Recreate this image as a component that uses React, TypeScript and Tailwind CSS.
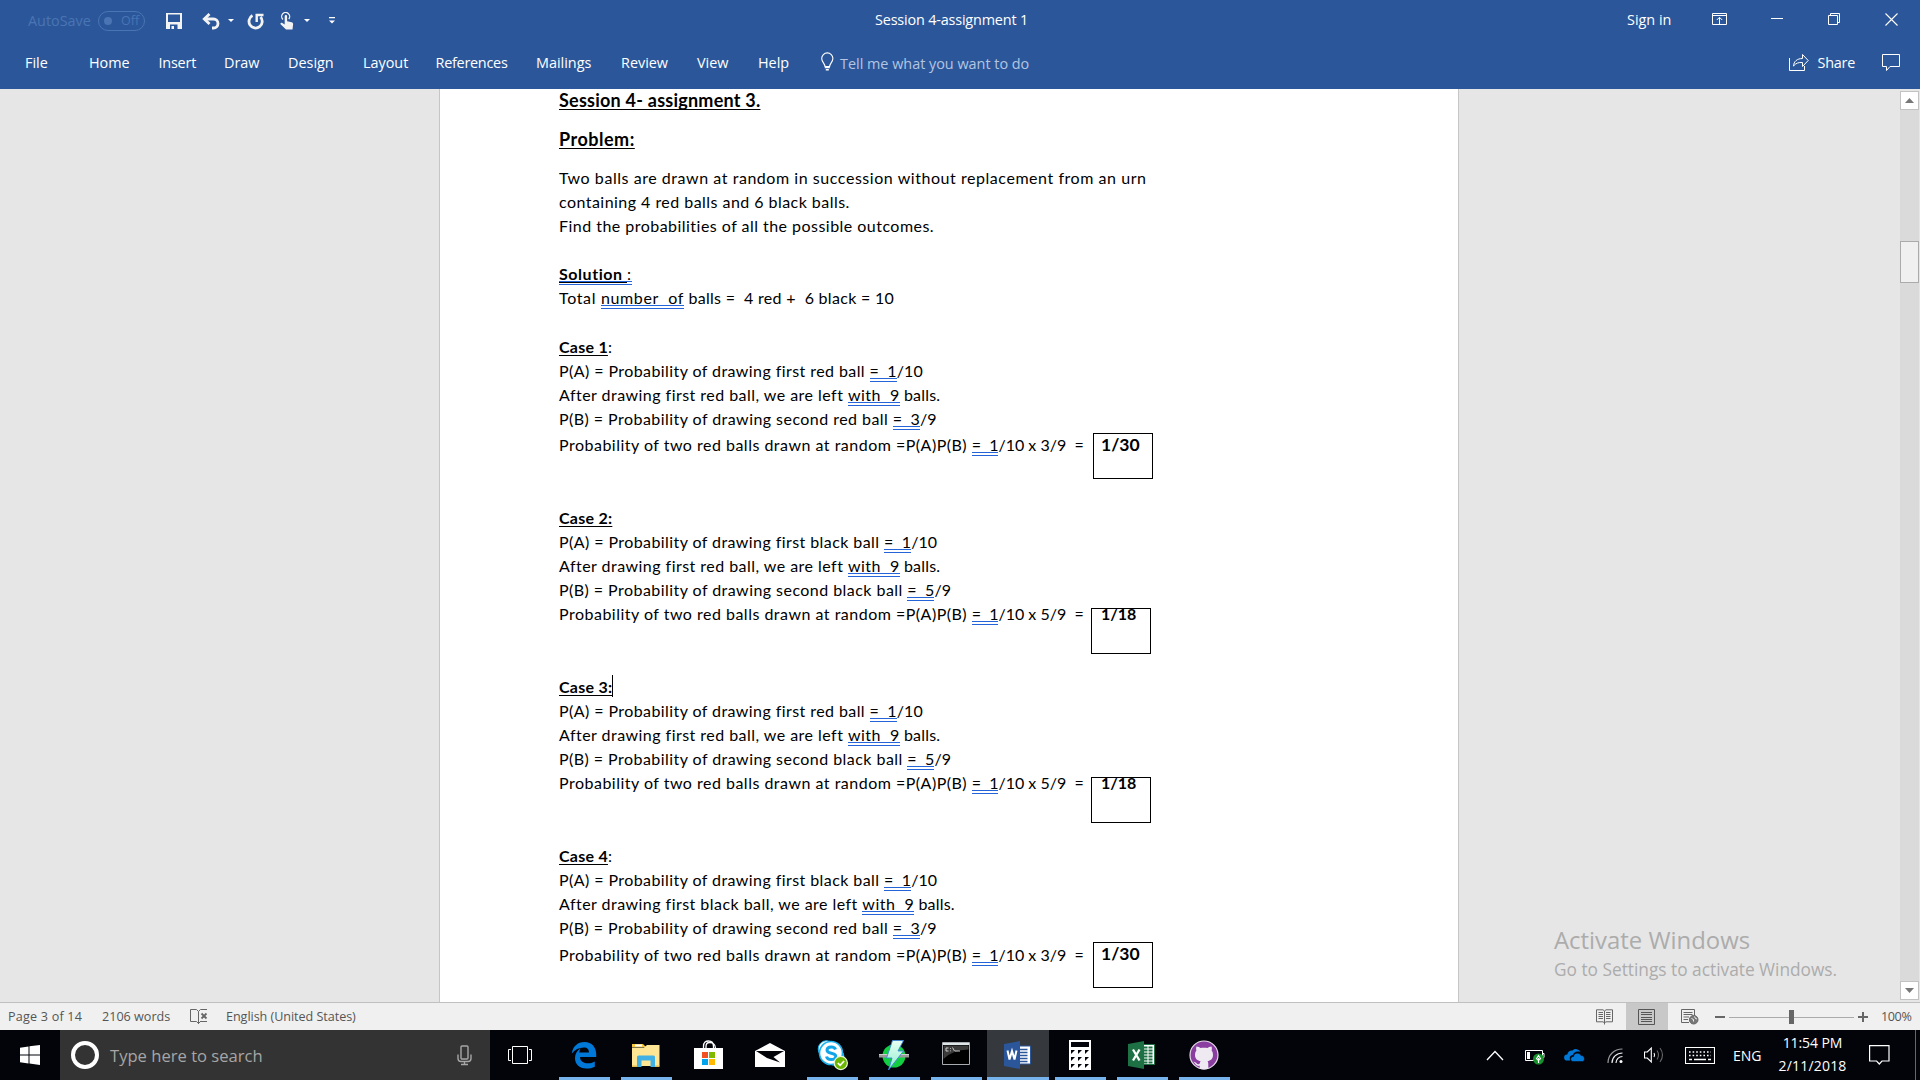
import React from 'react';

/* ---------- Document text helpers ---------- */

function Gram({ children }: { children: React.ReactNode }) {
  return (
    <span className="inline-block whitespace-pre border-b-4 border-double border-[#2563d9] leading-[14px]">{children}</span>
  );
}

function U({ children }: { children: React.ReactNode }) {
  return <span className="font-bold underline decoration-1 underline-offset-2 [text-decoration-skip-ink:none]">{children}</span>;
}

type CaseProps = {
  title: React.ReactNode;
  first: string;
  left: string;
  second: string;
  p2: string;
  answer: string;
  big: boolean;
  resultPad?: string;
};

function Case({ title, first, left, second, p2, answer, big, resultPad = '' }: CaseProps) {
  return (
    <section className={big ? 'h-[171px]' : 'h-[169px]'}>
      <div className="h-6 tracking-[0.25px]">{title}</div>
      <div className="h-6 tracking-[0.42px]">
        P(A) = Probability of drawing first {first} ball <span className="tracking-[0.1px]"><Gram>{'=  1'}</Gram>/10</span>
      </div>
      <div className="h-6 tracking-[0.46px]">
        After drawing first {left} ball, we are left <Gram>{'with  9'}</Gram><span className="tracking-[0.2px]"> balls.</span>
      </div>
      <div className="h-6 tracking-[0.45px]">
        P(B) = Probability of drawing second {second} ball <span className="tracking-[0.1px]"><Gram>{`=  ${p2}`}</Gram>/9</span>
      </div>
      <div className={'relative tracking-[0.49px] ' + resultPad}>
        Probability of two red balls drawn at random =P(A)P(B) <span className="tracking-[0px]"><Gram>{'=  1'}</Gram>/10 x {p2}/9{'  ='}</span>
        {big ? (
          <div className="absolute left-[534px] top-[2px] h-[46px] w-[60px] border border-black pl-[7px] text-[17.5px] font-bold leading-[22px] tracking-normal">
            {answer}
          </div>
        ) : (
          <div className="absolute left-[532px] top-[6px] h-[46px] w-[60px] border border-black pl-[9px] text-[16px] font-bold leading-[9px] tracking-normal">
            {answer}
          </div>
        )}
      </div>
    </section>
  );
}

/* ---------- Title bar icons ---------- */

const Caret = () => (
  <svg width="6" height="3" viewBox="0 0 6 3" className="shrink-0"><path d="M0 0h6L3 3z" fill="#fff" /></svg>
);

function TitleBar() {
  return (
    <div className="flex h-10 items-center text-[14.4px] text-white">
      <span className="w-[70px] pl-7 pt-0.5 tracking-normal text-[#4a74b3] whitespace-nowrap">AutoSave</span>
      <div className="ml-7 mt-0.5 flex h-5 w-[47px] shrink-0 items-center rounded-full border border-[#4a74b3] pl-[5px] text-[12.5px] text-[#4a74b3]">
        <span className="mr-[9px] size-2 rounded-full bg-[#4a74b3]" />Off
      </div>
      <svg className="ml-[21px] mt-0.5 shrink-0" width="16" height="16" viewBox="0 0 16 16">
        <path fill="#f3f3f3" fillRule="evenodd" d="M0 0h16v16H0zM2 1.500v7.500h12v-7.500zM4 11.500v4.500h1.500v-3H8V16h3.500v-4.500z" />
      </svg>
      <svg className="ml-5 mt-0.5 shrink-0" width="19" height="17" viewBox="0 0 19 17" fill="none" stroke="#f3f3f3" strokeWidth="2.800">
        <path d="M2 6h9.500a4.500 4.500 0 0 1 0 9H10" /><path d="M7.500 1 2.300 6l5.200 5" />
      </svg>
      <span className="ml-[7px]"><Caret /></span>
      <svg className="ml-[13px] mt-0.5 shrink-0" width="18" height="17" viewBox="0 0 18 17" fill="none" stroke="#f3f3f3" strokeWidth="2.8">
        <path d="M5.500 2.600A6.600 6.600 0 1 0 13.500 4" /><path d="M9.700 9V2h6.800" strokeWidth="2.4" />
      </svg>
      <svg className="ml-[15px] mt-0.5 shrink-0" width="14" height="18" viewBox="0 0 14 18">
        <path d="M3 7.500A4 4 0 1 1 8.800 7" fill="none" stroke="#f3f3f3" strokeWidth="1.300" />
        <path fill="#f3f3f3" d="M4.700 4.200c0-1.600 2.400-1.600 2.400 0v5l4.600 1.100c1 .3 1.500 1 1.400 2L12.500 17.500H6L.6 12.300c-.7-.9.7-2 1.700-1.400l2.400 1.500z" />
      </svg>
      <span className="ml-[10px]"><Caret /></span>
      <svg className="ml-[19px] shrink-0" width="6" height="7" viewBox="0 0 6 7" fill="#fff"><path d="M0 0h6v1.300H0zM0 3.500h6L3 6.500z" /></svg>
      <span className="ml-[540px] w-[752px] shrink-0 whitespace-nowrap tracking-[-0.17px]">Session 4-assignment 1</span>
      <span className="w-[85px] shrink-0">Sign in</span>
      <svg className="-mt-0.5 shrink-0" width="16" height="13" viewBox="0 0 16 13" fill="none" stroke="#fff">
        <path d="M.5.5h14v11H.5zM.5 2.500h14M7.500 11.500V4.500M4.800 7l2.700-2.700L10.200 7" />
      </svg>
      <svg className="-mt-[3px] ml-[43px] shrink-0" width="12" height="1"><path d="M0 .5h12" stroke="#fff" /></svg>
      <svg className="-mt-[2px] ml-[45px] shrink-0" width="13" height="13" viewBox="0 0 13 13" fill="none" stroke="#fff">
        <path d="M.5 2.500h9v9h-9zM2.500 2.500v-2h9v9h-2" />
      </svg>
      <svg className="-mt-[2px] ml-11 shrink-0" width="13" height="13" viewBox="0 0 13 13" stroke="#fff" strokeWidth="1.100"><path d="M.5.5l12 12M12.500.5l-12 12" /></svg>
    </div>
  );
}

const tabs: [string, string][] = [
  ['Home', 'w-[69.5px]'],
  ['Insert', 'w-[65.5px] tracking-[-0.2px]'],
  ['Draw', 'w-[64px]'],
  ['Design', 'w-[75px]'],
  ['Layout', 'w-[72.5px]'],
  ['References', 'w-[100.500px] tracking-[-0.25px]'],
  ['Mailings', 'w-[85px]'],
  ['Review', 'w-[76px]'],
  ['View', 'w-[61px]'],
  ['Help', 'w-[63px]'],
];

function RibbonTabs() {
  return (
    <div className="flex h-[45px] items-center whitespace-nowrap text-[14.4px] text-white">
      <span className="w-[89px] shrink-0 pl-[25px]">File</span>
      {tabs.map(([t, w]) => (
        <span key={t} className={'shrink-0 ' + w}>{t}</span>
      ))}
      <svg className="-mt-0.5 shrink-0" width="13" height="19" viewBox="0 0 13 19" fill="none" stroke="#fff" strokeWidth="1.100">
        <path d="M4 14.500c0-3-3.300-4.500-3.300-8a5.600 5.600 0 0 1 11.200 0c0 3.500-3.300 5-3.300 8z" />
        <path d="M3.800 15.500h5M4.800 17.800h3" strokeWidth="1.600" />
      </svg>
      <span className="ml-[6px] w-[948.500px] shrink-0 pt-0.5 text-[#b3c5e2]">Tell me what you want to do</span>
      <svg className="-mt-px shrink-0" width="21" height="19" viewBox="0 0 21 19" fill="none" stroke="#fff">
        <path d="M.5 5v12.500h15V13" />
        <path d="M4.500 13c.3-4.500 3.500-7.500 9-7.500v-4l5.700 6-5.700 6V9.500c-4-.2-6.500.5-9 3.500z" />
      </svg>
      <span className="ml-2 w-[64px] shrink-0 tracking-[-0.2px]">Share</span>
      <svg className="mt-px shrink-0" width="19" height="18" viewBox="0 0 19 18" fill="none" stroke="#fff">
        <path d="M.5.5h17v12H8L4.500 16.500v-4h-4z" />
      </svg>
    </div>
  );
}

/* ---------- Scroll bar ---------- */

function ScrollBar() {
  return (
    <div className="mr-px flex w-[19px] flex-col bg-[#e6e6e6] pb-[2px] pt-[2px]">
      <div className="flex h-[19px] items-center justify-center border border-[#c2c2c2] bg-white">
        <svg width="9" height="5" viewBox="0 0 9 5"><path d="M0 5h9L4.500 0z" fill="#777" /></svg>
      </div>
      <div className="flex-1 bg-[#dadada] pt-[131px]">
        <div className="h-[42px] border border-[#ababab] bg-[#f0f0f0]" />
      </div>
      <div className="flex h-[19px] items-center justify-center border border-[#c2c2c2] bg-white">
        <svg width="9" height="5" viewBox="0 0 9 5"><path d="M0 0h9L4.500 5z" fill="#777" /></svg>
      </div>
    </div>
  );
}

/* ---------- Status bar ---------- */

function StatusBar() {
  return (
    <div className="flex h-7 items-center whitespace-nowrap border-t border-[#c0c0c0] bg-[#f0f0f0] text-[12.6px] text-[#555]">
      <span className="w-[102px] pl-2 pt-0.5 tracking-[0.2px]">Page 3 of 14</span>
      <span className="w-[88px] pt-0.5">2106 words</span>
      <svg width="18" height="16" viewBox="0 0 18 16" fill="none" stroke="#666">
        <path d="M8.500 15V2.500L6.500.5h-6v12h6l2 2 2-2h1M8.500 2.500l2-2h6.500M10 12.500h7" />
        <path d="M11.500 4.500l5 5M16.500 4.500l-5 5" strokeWidth="1.800" />
      </svg>
      <span className="ml-[18px] w-[1370px] pt-0.5 tracking-[-0.05px]">English (United States)</span>
      <svg width="18" height="16" viewBox="0 0 18 16" fill="none" stroke="#666">
        <path d="M8.500 15.500V2L7 .8H.5v12h6.500l1.500 1 1.500-1h6.500V.8H10L8.500 2M2.500 3.500H7M2.500 5.500H7M2.500 7.500H7M2.500 9.500H7M10 3.500h4.500M10 5.500h4.500M10 7.500h4.500M10 9.500h4.500" />
      </svg>
      <div className="ml-3 flex h-full w-[42px] items-center justify-center bg-[#c8c8c8]">
        <svg className="-ml-px" width="17" height="16" viewBox="0 0 17 16" fill="none" stroke="#555"><path d="M.5.5h16v15H.5zM3 3.500h11M3 5.500h11M3 8.500h11M3 10.500h11M3 12.500h11" /></svg>
      </div>
      <svg className="ml-[13px]" width="18" height="16" viewBox="0 0 18 16" fill="none" stroke="#666">
        <path d="M8 13.500H.5V.5h13V6M2.500 3.500h9M2.500 5.500h9M2.500 8h5.500M2.500 10.500h4.500" />
        <circle cx="12.700" cy="10.700" r="4.300" fill="#777" stroke="#666" />
        <path d="M10.500 9.500l2 1v2M13.500 7.500l1 2 1.500.5" stroke="#f0f0f0" />
      </svg>
      <svg className="ml-4" width="154" height="16" viewBox="0 0 154 16">
        <path d="M0 7h10v2H0zM143 7h10v2h-10zM147 3h2v10h-2z" fill="#666" />
        <path d="M14 8h125v1H14z" fill="#ababab" />
        <path d="M74 1h5v14h-5z" fill="#666" />
      </svg>
      <span className="ml-3 pt-0.5 tracking-[-0.4px]">100%</span>
    </div>
  );
}

/* ---------- Task bar ---------- */

function Task({ children, on = true, active = false }: { children: React.ReactNode; on?: boolean; active?: boolean }) {
  return (
    <div className={'flex h-full w-[62px] shrink-0 flex-col items-center ' + (active ? 'bg-[#35383c]' : '')}>
      <div className="flex h-[47px] items-center justify-center pt-[3px]">{children}</div>
      {on && <div className={'h-[3px] bg-[#76b3ec] ' + (active ? 'w-full' : 'w-[51px]')} />}
    </div>
  );
}

function TaskBar() {
  return (
    <div className="flex h-[50px] items-center bg-[#02040a] text-white">
      <div className="flex w-[60px] justify-center">
        <svg width="20" height="20" viewBox="0 0 20 20" fill="#fff"><path d="M0 2.700 8.500 1.500v8H0zM9.500 1.300 20 0v9.500H9.500zM0 10.500h8.500v8L0 17.300zM9.500 10.500H20V20L9.500 18.600z" /></svg>
      </div>
      <div className="flex h-full w-[430px] items-center bg-[#333]">
        <div className="ml-[11px] size-7 rounded-full border-[4px] border-white" />
        <span className="ml-[11px] w-[347px] pt-0.5 text-[16.6px] text-[#a6a6a6]">Type here to search</span>
        <svg width="15" height="21" viewBox="0 0 15 21" fill="none" stroke="#a6a6a6" strokeWidth="1.400"><rect x="4" y="1" width="7" height="13" rx="1" /><path d="M1 9.500v4q0 3 3 3h7q3 0 3-3v-4M7.500 16.500v3M4 19.500h7" /></svg>
      </div>
      <div className="flex w-[63px] justify-center pr-[3px]">
        <svg width="24" height="18" viewBox="0 0 24 18" fill="none" stroke="#fff"><path d="M4.500.5h15v17h-15zM3 3.500H.5v11H3M21 3.500h2.500v11H21" /></svg>
      </div>
      <Task>
        <svg width="26" height="28" viewBox="0 0 26 28"><path fill="#0078d7" d="M.8 12.500C1.700 5.500 6.500 1 13.500 1 21 1 25.200 6.500 25.200 13.200V16H9c.2 4.500 3.800 6.300 8 6.300 2.500 0 4.700-.7 6.800-1.900v5.300c-2.500 1.300-5.200 1.800-8.300 1.800C8.200 27.500 4 23 4 17c0-4.200 2.200-7.700 6-9.800-1.300 1.300-1.700 3.300-1.800 4.300h9.700C18 8.500 16.500 6.500 12.800 6.500 8 6.500 3.800 8.800.8 12.500z" /></svg>
      </Task>
      <Task>
        <svg width="28" height="24" viewBox="0 0 28 24"><path d="M0 1h11l3 3H0z" fill="#f8c93f" /><path d="M3 1.500h7v2H3z" fill="#fff" /><path d="M0 4.500h12l3-2.500h12.500v21H0z" fill="#ffe694" /><path d="M5 24V14q0-1.500 1.500-1.500h15q1.500 0 1.500 1.500v10h-4.500v-6.500h-9V24z" fill="#41b0e4" /><path d="M0 22.500h5V24H0zM23 22.500h4.500V24H23z" fill="#e5bd4e" /></svg>
      </Task>
      <Task on={false}>
        <svg className="-mt-px" width="29" height="29" viewBox="0 0 29 29"><path d="M9.500 8V6.500C9.500 2 12 1 14.500 1s5 1 5 5.500V8M12 8V6.500c0-3 1-4 3.500-4S21.500 4 21.500 8" fill="none" stroke="#fff" strokeWidth="1.300" /><path d="M0 8h29v21H0z" fill="#fff" /><path d="M8 12h6v6H8z" fill="#f25022" /><path d="M15 12h6v6h-6z" fill="#7fba00" /><path d="M8 19h6v6H8z" fill="#00a4ef" /><path d="M15 19h6v6h-6z" fill="#ffb900" /></svg>
      </Task>
      <Task on={false}>
        <svg className="-mt-px" width="30" height="24" viewBox="0 0 30 24"><path d="M0 8 15 0l15 8v16H0z" fill="#fff" /><path d="M1 8h28L18.500 14l6.500 5.500L12 15z" fill="#02040a" /></svg>
      </Task>
      <Task>
        <svg width="32" height="32" viewBox="0 0 32 32"><circle cx="10.500" cy="10" r="8.300" fill="#fff" stroke="#1ab0ee" /><circle cx="19.500" cy="18" r="8.500" fill="#fff" stroke="#1ab0ee" /><circle cx="15" cy="14" r="11.500" fill="#fff" stroke="#1ab0ee" strokeWidth="1.600" /><path d="M19.500 10.500C18.500 7 11.300 7 11 11c-.2 4.500 8.800 2 8.800 6.500 0 4.200-8.500 4-9.300 0" fill="none" stroke="#12a5e8" strokeWidth="3" /><circle cx="24.800" cy="24" r="6.600" fill="#6bb700" stroke="#e9f5d8" strokeWidth="1.200" /><path d="m21.800 24 2.300 2.300L28.100 22" stroke="#fff" strokeWidth="1.700" fill="none" /></svg>
      </Task>
      <Task>
        <svg width="30" height="31" viewBox="0 0 30 31"><defs><linearGradient id="bolt" x1="0" y1="0" x2="0" y2="1"><stop offset="0" stopColor="#e9fff2" /><stop offset="1" stopColor="#8ceed0" /></linearGradient></defs><circle cx="15" cy="16" r="11.500" fill="#12cf42" /><path d="M0 14h30v3.500H0z" fill="#999" /><path d="M0 14h30v1H0z" fill="#ccc" /><path d="M13.500.5h11L19 11h5.500L9.500 30l3.500-12H7.500z" fill="url(#bolt)" stroke="#3c86d8" strokeWidth=".9" /></svg>
      </Task>
      <Task>
        <svg className="-mt-1" width="28" height="23" viewBox="0 0 28 23"><path d="M.5.5h27v22H.5z" fill="#000" stroke="#a8acb0" /><path d="M1 1h26v2H1z" fill="#dfe6ea" /><path d="M1.500 3.500h25v4Q10 8 1.500 17z" fill="#3b3b3b" /><path d="M6.500 6H4v3h2.500M8.500 6v.8M8.500 8.500v.8M10.500 5.500l2 3.500M13 9h5" fill="none" stroke="#ddd" strokeWidth=".9" /></svg>
      </Task>
      <Task active>
        <svg width="28" height="28" viewBox="0 0 28 28"><path d="M14 5h12.500v18H14z" fill="#fff" stroke="#2b579a" /><path d="M15 8.500h8.500M15 11.500h8.500M15 14.500h8.500M15 17.500h8.500M15 20.500h8.500" stroke="#2b579a" strokeWidth="1.400" /><path d="M0 3 16 0v28L0 25z" fill="#2b579a" /><path d="m3.500 9.500 2 9 2.500-8.500 2.500 8.500 2-9" fill="none" stroke="#fff" strokeWidth="2" /></svg>
      </Task>
      <Task>
        <svg width="22" height="30" viewBox="0 0 22 30"><path d="M0 0h22v30H0z" fill="#fff" /><path d="M2 2h18v5H2zM2 10h4l-4 4zM9 10h4l-4 4zM16 10h4l-4 4zM2 17h4l-4 4zM9 17h4l-4 4zM16 17h4l-4 4zM2 24h4l-4 4zM9 24h4l-4 4zM16 24h4l-4 4z" fill="#02040a" /></svg>
      </Task>
      <Task>
        <svg width="28" height="28" viewBox="0 0 28 28"><path d="M14 3.500h12.500v20H14z" fill="#fff" stroke="#1e7145" /><path d="M16 6.500h8.500M16 9.500h8.500M16 12.500h8.500M16 15.500h8.500M16 18.500h8.500M16 21.500h8.500" stroke="#1e7145" strokeWidth="1.800" /><path d="M20 4v19" stroke="#fff" /><path d="M0 3 16 0v28L0 25z" fill="#1e7145" /><path d="m5 8.500 6.500 11M11.500 8.500 5 19.500" fill="none" stroke="#fff" strokeWidth="2.300" /></svg>
      </Task>
      <Task>
        <svg width="30" height="30" viewBox="0 0 30 30"><circle cx="15" cy="15" r="14" fill="#8a3fa0" stroke="#e6dcea" strokeWidth="1.200" /><path d="M7.500 6.500c1.800 0 3 .8 4 1.500 2.300-.5 4.700-.5 7 0 1-.7 2.200-1.500 4-1.500.5 1.500.5 2.800.1 4 1 1.300 1.400 2.500 1.400 4.500 0 4-2.500 5.700-5.500 6.200.6.800.8 1.500.8 2.800v4.800q-4.300 1.200-8.600 0v-3c-3 .5-4-1-4.800-2.500-.5-.8-1-1-1.500-1.500 2.500-.5 3 2.500 5 2.500.7 0 1.300-.3 1.500-1.200 0-.8.300-1.400.8-1.900C8.700 20.700 6 19 6 15c0-2 .4-3.200 1.400-4.500-.4-1.200-.4-2.500.1-4z" fill="#efeaf2" /></svg>
      </Task>
      {/* Tray */}
      <svg className="ml-[251px] shrink-0" width="18" height="11" viewBox="0 0 18 11" fill="none" stroke="#fff" strokeWidth="1.300"><path d="m1 10 8-8.500L17 10" /></svg>
      <svg className="ml-[21px] mt-1 shrink-0" width="21" height="16" viewBox="0 0 21 16"><path d="M.5 1.500h17v10H.5zM18 4.500h1v4h-1" fill="none" stroke="#fff" /><path d="M2 3h3v7H2z" fill="#fff" /><circle cx="13.500" cy="10" r="5.500" fill="#16912b" /><path d="M13.500 14V9M13.500 6.500l-2 3.200 2 1.800 2-1.800z" fill="none" stroke="#fff" strokeWidth="1.100" /></svg>
      <svg className="ml-[18px] shrink-0" width="21" height="14" viewBox="0 0 21 14" fill="#0078d7"><path d="M3 12.500a3 3 0 0 1 .3-6A5 5 0 0 1 8.500 2.500 5 5 0 0 1 16.500 4C12 2.500 9 5 9 7c-3 0-4 3-2.700 5.500z" /><path d="M8.500 13.500c-2.500-.5-2.500-5 1-5 .5-4 6-4.500 7.500-1 3.500-.3 5 5 1.500 6z" stroke="#02040a" strokeWidth=".5" /></svg>
      <svg className="ml-[22px] shrink-0" width="17" height="17" viewBox="0 0 17 17" fill="none" stroke="#ddd" strokeWidth="1.200"><path d="M1 16C1 8 7 2 15.500 2" stroke="#999" /><path d="M5 16C5 10.500 9.500 6 15.500 6M9 16c0-3.500 2.800-6.500 6.500-6.500" stroke="#eee" /><circle cx="14" cy="14.500" r="1.500" fill="#fff" stroke="none" /></svg>
      <svg className="ml-5 shrink-0" width="21" height="18" viewBox="0 0 21 18" fill="none" stroke="#fff" strokeWidth="1.100"><path d="M.5 6v6h2.800l4 4V2l-4 4z" /><path d="M10 7q1.200 2 0 4" /><path d="M13 4.500q3 4.500 0 9M16 2q5 7 0 14" stroke="#666" /></svg>
      <svg className="ml-5 shrink-0" width="30" height="17" viewBox="0 0 30 17" fill="none" stroke="#fff" strokeWidth="1.100"><path d="M.5.5h29v16H.5z" /><path d="M4 5h22M4 8.500h22" strokeDasharray="1.600 2" strokeWidth="1.500" /><path d="M4 12.500h3M9 12.500h12M23 12.500h3" strokeWidth="1.400" /></svg>
      <span className="ml-[18px] w-[43px] shrink-0 text-[14px]">ENG</span>
      <div className="w-[73px] shrink-0 whitespace-nowrap text-center text-[14px] leading-[23px]">
        <div className="-mt-0.5 tracking-[-0.1px]">11:54 PM</div>
        <div className="tracking-[0.2px]">2/11/2018</div>
      </div>
      <svg className="ml-5 shrink-0" width="21" height="20" viewBox="0 0 21 20" fill="none" stroke="#fff" strokeWidth="1.200"><path d="M.6.6h19.400v15.400H13l-2.700 3-2.700-3h-7z" /></svg>
      <div className="ml-[25px] h-full w-px shrink-0 bg-[#666]" />
    </div>
  );
}

export default function App() {
  return (
    <div className="flex h-[1080px] w-[1920px] flex-col overflow-hidden bg-[#e6e6e6] font-['Open_Sans',sans-serif]">
      <header className="h-[89px] shrink-0 bg-[#2b579a]">
        <TitleBar />
        <RibbonTabs />
      </header>

      <main className="relative flex h-[913px] shrink-0">
        <div className="w-[439px] shrink-0" />
        <article className="w-[1020px] shrink-0 overflow-hidden whitespace-pre border-x border-[#c6c6c6] bg-white pl-[119px] font-[Lato,sans-serif] text-[16px] leading-6 text-black">
          <h1 className="h-[39px] text-[18px] leading-[22px] tracking-[0.23px]"><U>Session 4- assignment 3.</U></h1>
          <h2 className="h-[38px] text-[18px] leading-[22px] tracking-[0.5px]"><U>Problem:</U></h2>
          <p className="tracking-[0.55px]">Two balls are drawn at random in succession without replacement from an urn</p>
          <p className="tracking-[0.46px]">containing 4 red balls and 6 black balls.</p>
          <p className="h-12 tracking-[0.47px]">Find the probabilities of all the possible outcomes.</p>
          <p className="h-6 tracking-[0.55px]"><Gram><U>{'Solution '}</U>:</Gram></p>
          <p className="h-[49px] tracking-[0.3px]"><span className="tracking-[0.65px]">Total <Gram>{'number  of'}</Gram></span> balls ={'  '}4 red +{'  '}6 black = 10</p>
          <Case title={<><U>Case 1</U>:</>} first="red" left="red" second="red" p2="3" answer="1/30" big resultPad="pt-0.5" />
          <Case title={<U>Case 2:</U>} first="black" left="red" second="black" p2="5" answer="1/18" big={false} />
          <Case
            title={<span className="relative"><U>Case 3:</U><span className="absolute -right-px -top-0.5 h-[22px] w-px bg-black" /></span>}
            first="red" left="red" second="black" p2="5" answer="1/18" big={false}
          />
          <Case title={<><U>Case 4</U>:</>} first="black" left="black" second="red" p2="3" answer="1/30" big resultPad="pt-[3px]" />
        </article>
        <div className="flex-1" />
        <ScrollBar />
        <div className="absolute left-[1554px] top-[833px] whitespace-nowrap text-[#acacac]">
          <div className="text-[23.900px] leading-9">Activate Windows</div>
          <div className="text-[17.300px] leading-6">Go to Settings to activate Windows.</div>
        </div>
      </main>

      <StatusBar />
      <TaskBar />
    </div>
  );
}
